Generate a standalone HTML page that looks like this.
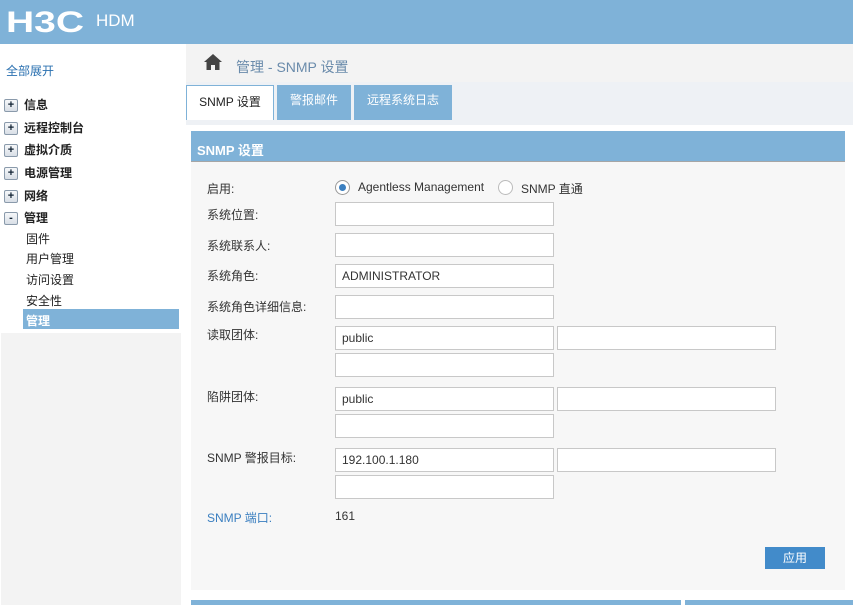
<!DOCTYPE html>
<html><head><meta charset="utf-8"><style>
*{margin:0;padding:0;box-sizing:border-box}
body{width:853px;height:605px;overflow:hidden;background:#fff;font-family:"Liberation Sans","Noto Sans CJK SC",sans-serif;font-size:12px;color:#222;position:relative}
.a{position:absolute}
.hdr{left:0;top:0;width:853px;height:44px;background:#7fb2d8}
.logo{left:6px;top:6px;color:#fff;font-size:30px;font-weight:bold;font-family:"Liberation Sans",sans-serif;transform:scaleX(1.3);transform-origin:left}
.hdm{left:96px;top:11px;color:#fff;font-size:17px}
.tree div{position:absolute;left:4px;font-weight:bold;font-size:12px}
.pb{display:inline-block;width:14px;height:13px;border:1px solid #8a9aab;border-radius:2px;background:linear-gradient(#f6f8fa,#d8dee6);font-size:11px;line-height:11px;text-align:center;vertical-align:middle;margin-right:6px;color:#123}
.sub{position:absolute;left:26px;font-size:12px}
.inp{position:absolute;width:219px;height:24px;border:1px solid #c8c8c8;background:#fff;padding-left:6px;line-height:22px;font-size:12px;color:#333}
.lbl{position:absolute;left:207px;font-size:12px;color:#333}
.tab{position:absolute;top:85px;height:35px;background:#7fb2d8;color:#fff;text-align:center;line-height:30px;font-size:12px}
</style></head><body>
<div class="a hdr"></div>
<div class="a logo">H3C</div>
<div class="a hdm">HDM</div>
<div class="a" style="left:6px;top:62px;color:#2a70b0">全部展开</div>
<div class="tree">
<div style="top:96px"><span class="pb">+</span>信息</div>
<div style="top:119px"><span class="pb">+</span>远程控制台</div>
<div style="top:141px"><span class="pb">+</span>虚拟介质</div>
<div style="top:164px"><span class="pb">+</span>电源管理</div>
<div style="top:187px"><span class="pb">+</span>网络</div>
<div style="top:209px"><span class="pb">-</span>管理</div>
</div>
<div class="sub" style="top:230px">固件</div>
<div class="sub" style="top:250px">用户管理</div>
<div class="sub" style="top:271px">访问设置</div>
<div class="sub" style="top:292px">安全性</div>
<div class="a" style="left:23px;top:309px;width:156px;height:20px;background:#7fb2d8;color:#fff;font-weight:bold;padding:3px 0 0 3px">管理</div>
<div class="a" style="left:1px;top:333px;width:180px;height:272px;background:#f3f3f3"></div>
<div class="a" style="left:186px;top:44px;width:667px;height:561px;background:#eef1f5"></div>
<div class="a" style="left:186px;top:44px;width:667px;height:38px;background:#f3f3f3"></div>
<svg class="a" style="left:204px;top:54px" width="18" height="16" viewBox="0 0 18 16"><path d="M9 0L0 8h2.5v8h4.5v-5h4v5h4.5V8H18z" fill="#444"/></svg>
<div class="a" style="left:236px;top:57px;color:#6a8bab;font-size:14px">管理 - SNMP 设置</div>
<div class="tab" style="left:186px;width:88px;background:#fff;color:#222;border:1px solid #7fb2d8;border-bottom:none;line-height:33px">SNMP 设置</div>
<div class="tab" style="left:277px;width:74px">警报邮件</div>
<div class="tab" style="left:354px;width:98px">远程系统日志</div>
<div class="a" style="left:186px;top:120px;width:667px;height:5px;background:#eef1f5"></div>
<div class="a" style="left:186px;top:125px;width:667px;height:480px;background:#fff"></div>
<div class="a" style="left:191px;top:131px;width:654px;height:459px;background:#f7f7f7"></div>
<div class="a" style="left:191px;top:131px;width:654px;height:31px;background:#7fb2d8;border-bottom:1px solid #a6a6a6;color:#fff;font-weight:bold;font-size:13px;padding:9px 0 0 6px">SNMP 设置</div>
<div class="lbl" style="top:180px">启用:</div>
<div class="a" style="left:335px;top:180px;width:15px;height:15px;border:1px solid #999;border-radius:50%;background:#fff"><div style="margin:3px;width:7px;height:7px;border-radius:50%;background:#3b7fc0"></div></div>
<div class="a" style="left:358px;top:180px;color:#333">Agentless Management</div>
<div class="a" style="left:498px;top:180px;width:15px;height:15px;border:1px solid #bbb;border-radius:50%;background:#fff"></div>
<div class="a" style="left:521px;top:180px;color:#333">SNMP 直通</div>
<div class="lbl" style="top:206px">系统位置:</div><div class="inp" style="left:335px;top:202px"></div>
<div class="lbl" style="top:237px">系统联系人:</div><div class="inp" style="left:335px;top:233px"></div>
<div class="lbl" style="top:267px">系统角色:</div><div class="inp" style="left:335px;top:264px">ADMINISTRATOR</div>
<div class="lbl" style="top:298px">系统角色详细信息:</div><div class="inp" style="left:335px;top:295px"></div>
<div class="lbl" style="top:326px">读取团体:</div><div class="inp" style="left:335px;top:326px">public</div><div class="inp" style="left:557px;top:326px"></div><div class="inp" style="left:335px;top:353px"></div>
<div class="lbl" style="top:388px">陷阱团体:</div><div class="inp" style="left:335px;top:387px">public</div><div class="inp" style="left:557px;top:387px"></div><div class="inp" style="left:335px;top:414px"></div>
<div class="lbl" style="top:449px">SNMP 警报目标:</div><div class="inp" style="left:335px;top:448px">192.100.1.180</div><div class="inp" style="left:557px;top:448px"></div><div class="inp" style="left:335px;top:475px"></div>
<div class="lbl" style="top:509px;color:#3b7fc0">SNMP 端口:</div><div class="a" style="left:335px;top:509px;color:#333">161</div>
<div class="a" style="left:765px;top:547px;width:60px;height:22px;background:#428bca;color:#fff;text-align:center;line-height:22px">应用</div>
<div class="a" style="left:191px;top:600px;width:490px;height:5px;background:#7fb2d8"></div>
<div class="a" style="left:685px;top:600px;width:168px;height:5px;background:#7fb2d8"></div>
</body></html>
